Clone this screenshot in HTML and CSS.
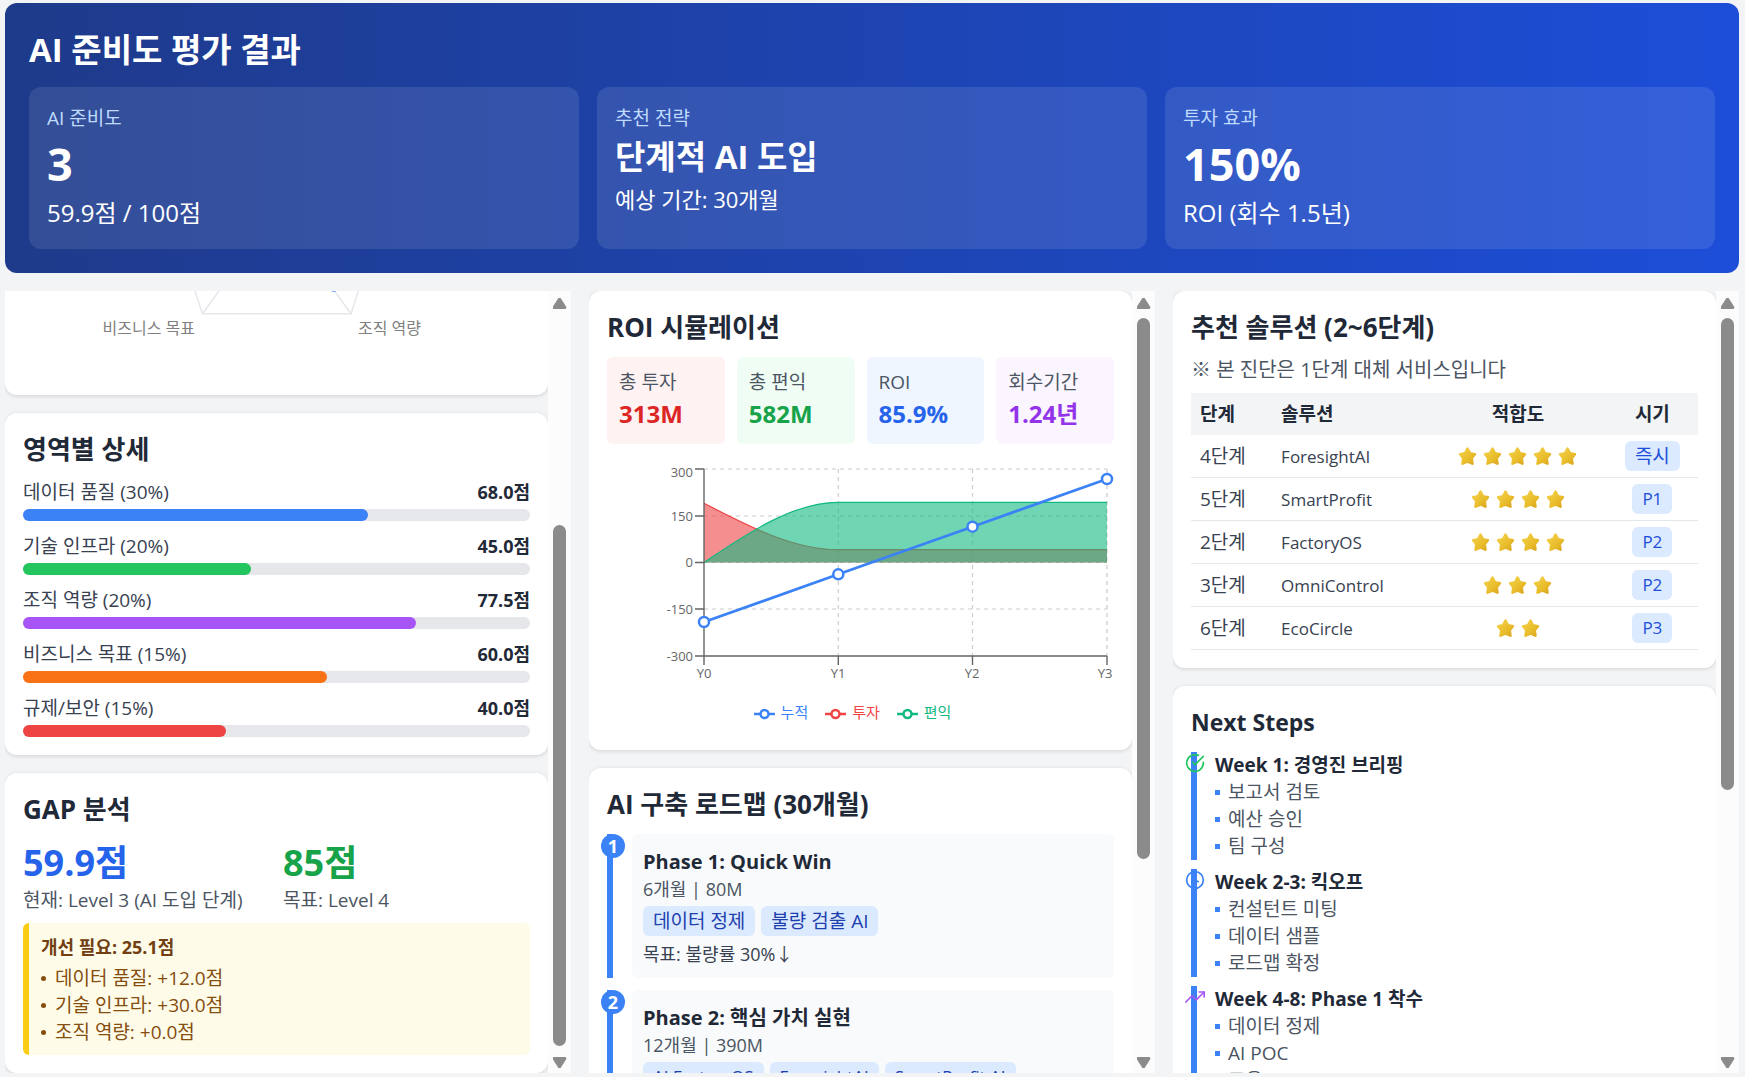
FILE: index.html
```html
<!DOCTYPE html>
<html lang="ko">
<head>
    <meta charset="UTF-8">
    <meta name="viewport" content="width=device-width, initial-scale=1.0">
    <title>AI 준비도 평가 결과</title>
    <link rel="stylesheet" href="styles.css">
</head>
<body>
    <svg class="defs" aria-hidden="true">
        <defs>
            <linearGradient id="gold" x1="0" y1="0" x2="1" y2="1">
                <stop offset="0" stop-color="#f3d04a"/>
                <stop offset="0.6" stop-color="#e9bd2b"/>
                <stop offset="1" stop-color="#dba520"/>
            </linearGradient>
            <symbol id="star" viewBox="0 0 18 18">
                <path d="M9 1.6 11.4 6 16 6.8 13 10.6 13.7 15.800 9 13.900 4.300 15.800 5 10.600 2 6.800 6.600 6Z" fill="url(#gold)" stroke="url(#gold)" stroke-width="2.400" stroke-linejoin="round"/>
            </symbol>
        </defs>
    </svg>

    <header class="hero">
        <h1>AI 준비도 평가 결과</h1>
        <div class="hero-grid">
            <div class="hero-card">
                <div class="hero-label">AI 준비도</div>
                <div class="hero-number">3</div>
                <div class="hero-sub">59.9점 / 100점</div>
            </div>
            <div class="hero-card">
                <div class="hero-label">추천 전략</div>
                <div class="hero-strategy">단계적 AI 도입</div>
                <div class="hero-period">예상 기간: 30개월</div>
            </div>
            <div class="hero-card">
                <div class="hero-label">투자 효과</div>
                <div class="hero-number">150%</div>
                <div class="hero-sub">ROI (회수 1.5년)</div>
            </div>
        </div>
    </header>

    <main class="columns">
        <section class="column">
            <div class="scroll scroll-end">
                <div class="card">
                    <svg class="radar" viewBox="0 0 507 338">
                        <g class="radar-grid">
                            <path d="M253.7 46 373.9 133.3 328 274.7 179.4 274.7 133.5 133.3Z"/>
                            <path d="M253.7 77.6 343.9 143.1 309.4 249.1 198 249.1 163.6 143.1Z"/>
                            <path d="M253.7 109.2 313.8 152.9 290.9 223.6 216.6 223.6 193.6 152.9Z"/>
                            <path d="M253.7 172.4V46M253.7 172.4 373.9 133.3M253.7 172.4 328 274.7M253.7 172.4 179.4 274.7M253.7 172.4 133.5 133.3"/>
                        </g>
                        <path class="radar-area" d="M253.7 86.4 307.8 154.8 311.3 251.7 209.1 233.8 205.6 156.8Z"/>
                        <text x="335" y="295">조직 역량</text>
                        <text x="172" y="295" text-anchor="end">비즈니스 목표</text>
                    </svg>
                </div>

                <div class="card">
                    <h2>영역별 상세</h2>
                    <div class="areas">
                        <div class="area">
                            <div class="area-head"><span>데이터 품질 (30%)</span><b>68.0점</b></div>
                            <div class="track"><div class="fill blue" style="width: 68%"></div></div>
                        </div>
                        <div class="area">
                            <div class="area-head"><span>기술 인프라 (20%)</span><b>45.0점</b></div>
                            <div class="track"><div class="fill green" style="width: 45%"></div></div>
                        </div>
                        <div class="area">
                            <div class="area-head"><span>조직 역량 (20%)</span><b>77.5점</b></div>
                            <div class="track"><div class="fill purple" style="width: 77.5%"></div></div>
                        </div>
                        <div class="area">
                            <div class="area-head"><span>비즈니스 목표 (15%)</span><b>60.0점</b></div>
                            <div class="track"><div class="fill orange" style="width: 60%"></div></div>
                        </div>
                        <div class="area">
                            <div class="area-head"><span>규제/보안 (15%)</span><b>40.0점</b></div>
                            <div class="track"><div class="fill red" style="width: 40%"></div></div>
                        </div>
                    </div>
                </div>

                <div class="card">
                    <h2>GAP 분석</h2>
                    <div class="gap-grid">
                        <div>
                            <div class="gap-score now">59.9점</div>
                            <div class="gap-text">현재: Level 3 (AI 도입 단계)</div>
                        </div>
                        <div>
                            <div class="gap-score goal">85점</div>
                            <div class="gap-text">목표: Level 4</div>
                        </div>
                    </div>
                    <div class="notice">
                        <div class="notice-title">개선 필요: 25.1점</div>
                        <ul>
                            <li>데이터 품질: +12.0점</li>
                            <li>기술 인프라: +30.0점</li>
                            <li>조직 역량: +0.0점</li>
                        </ul>
                    </div>
                </div>
            </div>
            <div class="rail" aria-hidden="true">
                <span class="arrow up"></span>
                <div class="rail-track rail-end"><div class="thumb" style="height: 71.5%"></div></div>
                <span class="arrow down"></span>
            </div>
        </section>

        <section class="column">
            <div class="scroll">
                <div class="card">
                    <h2>ROI 시뮬레이션</h2>
                    <div class="stats">
                        <div class="stat stat-red"><div class="stat-label">총 투자</div><div class="stat-value">313M</div></div>
                        <div class="stat stat-green"><div class="stat-label">총 편익</div><div class="stat-value">582M</div></div>
                        <div class="stat stat-blue"><div class="stat-label">ROI</div><div class="stat-value">85.9%</div></div>
                        <div class="stat stat-purple"><div class="stat-label">회수기간</div><div class="stat-value">1.24년</div></div>
                    </div>
                    <div class="chart">
                        <svg viewBox="0 0 507 228">
                            <g class="grid-lines">
                                <path d="M97 13H500M97 60H500M97 106.5H500M97 153H500"/>
                                <path d="M231.3 13V200M365.5 13V200M500 13V200"/>
                            </g>
                            <path class="invest-area" d="M97 47.3C141.7 70.5 186.6 93.7 231.3 93.7H500V106.5H97Z"/>
                            <path class="invest-line" d="M97 47.3C141.7 70.5 186.6 93.7 231.3 93.7H500"/>
                            <path class="benefit-area" d="M97 106.5C141.7 76.4 186.6 46.3 231.3 46.3H500V106.5H97Z"/>
                            <path class="benefit-line" d="M97 106.5C141.7 76.4 186.6 46.3 231.3 46.3H500"/>
                            <path class="axis" d="M97 13V200H500M88 13H97M88 60H97M88 106.5H97M88 153H97M88 200H97M97 200V209M231.3 200V209M365.5 200V209M500 200V209"/>
                            <path class="total-line" d="M97 166 231.3 118.3 365.5 70.7 500 23"/>
                            <g class="total-dots">
                                <circle cx="97" cy="166" r="5"/>
                                <circle cx="231.3" cy="118.3" r="5"/>
                                <circle cx="365.5" cy="70.7" r="5"/>
                                <circle cx="500" cy="23" r="5"/>
                            </g>
                            <g text-anchor="end">
                                <text x="86" y="21">300</text>
                                <text x="86" y="65">150</text>
                                <text x="86" y="111">0</text>
                                <text x="86" y="158">-150</text>
                                <text x="86" y="205">-300</text>
                            </g>
                            <g text-anchor="middle">
                                <text x="97" y="222">Y0</text>
                                <text x="231" y="222">Y1</text>
                                <text x="365" y="222">Y2</text>
                                <text x="498" y="222">Y3</text>
                            </g>
                        </svg>
                        <ul class="legend">
                            <li class="legend-total"><svg viewBox="0 0 21 12"><path d="M0 6H21"/><circle cx="10.5" cy="6" r="4"/></svg>누적</li>
                            <li class="legend-invest"><svg viewBox="0 0 21 12"><path d="M0 6H21"/><circle cx="10.5" cy="6" r="4"/></svg>투자</li>
                            <li class="legend-benefit"><svg viewBox="0 0 21 12"><path d="M0 6H21"/><circle cx="10.5" cy="6" r="4"/></svg>편익</li>
                        </ul>
                    </div>
                </div>

                <div class="card">
                    <h2>AI 구축 로드맵 (30개월)</h2>
                    <div class="phase">
                        <span class="phase-num">1</span>
                        <div class="phase-body">
                            <h3>Phase 1: Quick Win</h3>
                            <div class="phase-meta">6개월 | 80M</div>
                            <div class="chips"><span class="chip">데이터 정제</span><span class="chip">불량 검출 AI</span></div>
                            <div class="phase-goal">목표: 불량률 30%↓</div>
                        </div>
                    </div>
                    <div class="phase">
                        <span class="phase-num">2</span>
                        <div class="phase-body">
                            <h3>Phase 2: 핵심 가치 실현</h3>
                            <div class="phase-meta">12개월 | 390M</div>
                            <div class="chips"><span class="chip latin">AI FactoryOS</span><span class="chip latin">ForesightAI</span><span class="chip latin">SmartProfit AI</span></div>
                        </div>
                    </div>
                </div>
            </div>
            <div class="rail" aria-hidden="true">
                <span class="arrow up"></span>
                <div class="rail-track"><div class="thumb" style="height: 74.3%"></div></div>
                <span class="arrow down"></span>
            </div>
        </section>

        <section class="column">
            <div class="scroll">
                <div class="card">
                    <h2>추천 솔루션 (2~6단계)</h2>
                    <p class="table-note">※ 본 진단은 1단계 대체 서비스입니다</p>
                    <table>
                        <thead>
                            <tr><th class="col-step">단계</th><th class="col-name">솔루션</th><th class="col-fit">적합도</th><th class="col-time">시기</th></tr>
                        </thead>
                        <tbody>
                            <tr>
                                <td>4단계</td><td class="latin">ForesightAI</td>
                                <td><div class="stars"><svg><use href="#star"/></svg><svg><use href="#star"/></svg><svg><use href="#star"/></svg><svg><use href="#star"/></svg><svg><use href="#star"/></svg></div></td>
                                <td class="center"><span class="chip">즉시</span></td>
                            </tr>
                            <tr>
                                <td>5단계</td><td class="latin">SmartProfit</td>
                                <td><div class="stars"><svg><use href="#star"/></svg><svg><use href="#star"/></svg><svg><use href="#star"/></svg><svg><use href="#star"/></svg></div></td>
                                <td class="center"><span class="chip latin">P1</span></td>
                            </tr>
                            <tr>
                                <td>2단계</td><td class="latin">FactoryOS</td>
                                <td><div class="stars"><svg><use href="#star"/></svg><svg><use href="#star"/></svg><svg><use href="#star"/></svg><svg><use href="#star"/></svg></div></td>
                                <td class="center"><span class="chip latin">P2</span></td>
                            </tr>
                            <tr>
                                <td>3단계</td><td class="latin">OmniControl</td>
                                <td><div class="stars"><svg><use href="#star"/></svg><svg><use href="#star"/></svg><svg><use href="#star"/></svg></div></td>
                                <td class="center"><span class="chip latin">P2</span></td>
                            </tr>
                            <tr>
                                <td>6단계</td><td class="latin">EcoCircle</td>
                                <td><div class="stars"><svg><use href="#star"/></svg><svg><use href="#star"/></svg></div></td>
                                <td class="center"><span class="chip latin">P3</span></td>
                            </tr>
                        </tbody>
                    </table>
                </div>

                <div class="card">
                    <h2 class="title-latin">Next Steps</h2>
                    <div class="step">
                        <svg class="step-icon icon-green" viewBox="0 0 24 24"><path d="M22 11.08V12a10 10 0 1 1-5.93-9.14"/><path d="M22 4 12 14.01l-3-3"/></svg>
                        <h4>Week 1: 경영진 브리핑</h4>
                        <ul>
                            <li>보고서 검토</li>
                            <li>예산 승인</li>
                            <li>팀 구성</li>
                        </ul>
                    </div>
                    <div class="step">
                        <svg class="step-icon icon-blue" viewBox="0 0 24 24"><circle cx="12" cy="12" r="10"/><path d="M12 6v6l4 2"/></svg>
                        <h4>Week 2-3: 킥오프</h4>
                        <ul>
                            <li>컨설턴트 미팅</li>
                            <li>데이터 샘플</li>
                            <li>로드맵 확정</li>
                        </ul>
                    </div>
                    <div class="step">
                        <svg class="step-icon icon-purple" viewBox="0 0 24 24"><path d="M23 6l-9.500 9.500-5-5L1 18"/><path d="M17 6h6v6"/></svg>
                        <h4>Week 4-8: Phase 1 착수</h4>
                        <ul>
                            <li>데이터 정제</li>
                            <li>AI POC</li>
                            <li>교육</li>
                        </ul>
                    </div>
                </div>
            </div>
            <div class="rail" aria-hidden="true">
                <span class="arrow up"></span>
                <div class="rail-track"><div class="thumb" style="height: 64.8%"></div></div>
                <span class="arrow down"></span>
            </div>
        </section>
    </main>
</body>
</html>
```
FILE: styles.css
```css
* {
    box-sizing: border-box;
}
body {
    margin: 0;
    height: 100vh;
    padding: 3px 6px 4px 5px;
    display: flex;
    flex-direction: column;
    gap: 18px;
    background: #f3f4f6;
    color: #1f2937;
    font-family: "Open Sans", "Noto Sans CJK KR", sans-serif;
    font-size: 19px;
    line-height: 27px;
    overflow: hidden;
}
h1, h2, h3, h4, p, ul {
    margin: 0;
    padding: 0;
}
ul {
    list-style: none;
}
.defs {
    position: absolute;
    width: 0;
    height: 0;
}

/* header */
.hero {
    padding: 24px;
    border-radius: 12px;
    background: linear-gradient(to right, #1e3a8a, #1d4ed8);
    color: white;
}
.hero h1 {
    font-size: 33px;
    line-height: 45px;
    margin-bottom: 15px;
}
.hero-grid {
    display: grid;
    grid-template-columns: repeat(3, 1fr);
    gap: 18px;
}
.hero-card {
    padding: 18px;
    border-radius: 12px;
    background: rgba(255, 255, 255, 0.1);
}
.hero-label {
    color: #bfdbfe;
}
.hero-number {
    font-size: 45px;
    line-height: 63px;
    font-weight: bold;
}
.hero-sub {
    font-size: 24px;
    line-height: 36px;
}
.hero-strategy {
    font-size: 33px;
    line-height: 50px;
    font-weight: bold;
}
.hero-period {
    font-size: 22px;
    line-height: 34px;
}

/* columns */
.columns {
    flex: 1;
    min-height: 0;
    display: grid;
    grid-template-columns: repeat(3, minmax(0, 1fr));
    grid-template-rows: minmax(0, 1fr);
    gap: 18px;
}
.column {
    display: flex;
    min-height: 0;
}
.scroll {
    flex: 1;
    min-width: 0;
    display: flex;
    flex-direction: column;
    gap: 18px;
    overflow: hidden;
}
.scroll-end {
    justify-content: flex-end;
}
.rail {
    width: 23px;
    flex-shrink: 0;
    display: flex;
    flex-direction: column;
    align-items: center;
    justify-content: space-between;
    padding: 7px 0 5px;
    background: #fcfcfc;
}
.rail-track {
    flex: 1;
    margin: 9px 0 11px;
    display: flex;
    flex-direction: column;
}
.rail-end {
    justify-content: flex-end;
}
.thumb {
    width: 13px;
    border-radius: 7px;
    background: #8b8b8b;
}
.arrow {
    width: 14px;
    height: 11px;
    background: #8b8b8b;
}
.arrow.up {
    clip-path: polygon(42% 0, 58% 0, 100% 85%, 94% 100%, 6% 100%, 0 85%);
}
.arrow.down {
    clip-path: polygon(6% 0, 94% 0, 100% 15%, 58% 100%, 42% 100%, 0 15%);
}
.card {
    flex-shrink: 0;
    padding: 18px;
    border-radius: 12px;
    background: white;
    box-shadow: 0 1px 4px rgba(0, 0, 0, 0.14);
}
.card h2 {
    font-size: 26px;
    line-height: 36px;
    margin-bottom: 12px;
}
.card .title-latin {
    font-size: 23px;
}

/* left column */
.radar {
    display: block;
    width: 100%;
}
.radar-grid path {
    fill: none;
    stroke: #e5e7eb;
    stroke-width: 1.5;
}
.radar-area {
    fill: rgba(59, 130, 246, 0.5);
    stroke: #3b82f6;
    stroke-width: 2;
}
.radar text {
    font-size: 16px;
    fill: #808080;
}
.areas {
    display: flex;
    flex-direction: column;
    gap: 12px;
}
.area-head {
    display: flex;
    justify-content: space-between;
    margin-bottom: 3px;
    color: #374151;
}
.area-head b {
    font-size: 18px;
    color: #1f2937;
}
.track {
    height: 12px;
    border-radius: 6px;
    background: #e5e7eb;
}
.fill {
    height: 12px;
    border-radius: 6px;
}
.blue { background: #3b82f6; }
.green { background: #22c55e; }
.purple { background: #a855f7; }
.orange { background: #f97316; }
.red { background: #ef4444; }

.gap-grid {
    display: grid;
    grid-template-columns: 1fr 1fr;
    gap: 13px;
}
.gap-score {
    font-size: 36px;
    line-height: 48px;
    font-weight: bold;
}
.now { color: #2563eb; }
.goal { color: #16a34a; }
.gap-text {
    color: #4b5563;
    white-space: nowrap;
}
.notice {
    margin-top: 9px;
    padding: 11px 12px 9px;
    border-left: 6px solid #facc15;
    border-radius: 6px;
    background: #fefce8;
    color: #854d0e;
}
.notice-title {
    margin-bottom: 4px;
    font-size: 18px;
    font-weight: bold;
    color: #713f12;
}
.notice li {
    display: flex;
    align-items: center;
    gap: 9px;
}
.notice li::before {
    content: '';
    width: 5px;
    height: 5px;
    border-radius: 50%;
    background: #854d0e;
}

/* middle column */
.stats {
    display: grid;
    grid-template-columns: repeat(4, 1fr);
    gap: 12px;
}
.stat {
    padding: 12px;
    border-radius: 6px;
    white-space: nowrap;
}
.stat-label {
    color: #4b5563;
}
.stat-value {
    font-size: 24px;
    line-height: 36px;
    font-weight: bold;
}
.stat-red { background: #fef2f2; color: #dc2626; }
.stat-green { background: #f0fdf4; color: #16a34a; }
.stat-blue { background: #eff6ff; color: #2563eb; }
.stat-purple { background: #faf5ff; color: #9333ea; }

.chart {
    margin-top: 12px;
    padding-bottom: 9px;
}
.chart > svg {
    display: block;
    width: 100%;
    overflow: visible;
}
.chart text {
    font-size: 13px;
    fill: #666;
}
.grid-lines {
    fill: none;
    stroke: #ccc;
    stroke-width: 1.2;
    stroke-dasharray: 4 4;
}
.invest-area { fill: #ef4444; fill-opacity: 0.6; }
.invest-line { fill: none; stroke: #ef4444; stroke-width: 1.2; }
.benefit-area { fill: #10b981; fill-opacity: 0.6; }
.benefit-line { fill: none; stroke: #10b981; stroke-width: 1.2; }
.axis {
    fill: none;
    stroke: #666;
    stroke-width: 1.4;
}
.total-line {
    fill: none;
    stroke: #3b82f6;
    stroke-width: 2.8;
}
.total-dots circle {
    fill: white;
    stroke: #3b82f6;
    stroke-width: 2.5;
}
.legend {
    display: flex;
    justify-content: center;
    gap: 17px;
    margin-top: 17px;
    padding-right: 16px;
    font-size: 15px;
    line-height: 22px;
}
.legend li {
    display: flex;
    align-items: center;
    gap: 6px;
}
.legend svg {
    width: 21px;
    height: 12px;
    margin-top: 3px;
    fill: white;
    stroke: currentColor;
    stroke-width: 2.5;
}
.legend-total { color: #3b82f6; }
.legend-invest { color: #ef4444; }
.legend-benefit { color: #10b981; }

.phase {
    position: relative;
    padding-left: 19px;
    border-left: 6px solid #3b82f6;
}
.phase + .phase {
    margin-top: 12px;
}
.phase-num {
    position: absolute;
    left: -12px;
    top: 0;
    width: 24px;
    height: 24px;
    border-radius: 50%;
    background: #3b82f6;
    color: white;
    font-size: 18px;
    line-height: 24px;
    font-weight: bold;
    text-align: center;
}
.phase-body {
    padding: 13px 11px 10px;
    border-radius: 6px;
    background: #f9fafb;
}
.phase h3 {
    font-size: 20px;
    line-height: 29px;
}
.phase-meta {
    font-size: 18px;
    color: #4b5563;
}
.phase-goal {
    font-size: 18px;
    color: #374151;
}
.chips {
    display: flex;
    gap: 6px;
    margin: 3px 0 5px;
}
.chip {
    display: inline-block;
    padding: 0 10px;
    border-radius: 6px;
    background: #dbeafe;
    color: #1d4ed8;
    line-height: 30px;
    white-space: nowrap;
}
.chips .chip {
    color: #1e40af;
}
.latin {
    font-size: 17px;
}

/* right column */
.table-note {
    margin: -1px 0 10px;
    font-size: 20px;
    color: #4b5563;
}
table {
    width: 100%;
    table-layout: fixed;
    border-collapse: separate;
    border-spacing: 0;
}
th {
    height: 42px;
    padding: 0 9px;
    background: #f3f4f6;
    text-align: left;
}
td {
    height: 43px;
    padding: 0 9px;
    border-bottom: 1px solid #e5e7eb;
    color: #374151;
}
.col-step { width: 16%; }
.col-name { width: 31%; }
.col-fit { width: 35%; text-align: center; }
.col-time { width: 18%; text-align: center; }
.center {
    text-align: center;
}
.stars {
    display: flex;
    justify-content: center;
    gap: 6px;
}
.stars svg {
    width: 19px;
    height: 19px;
}

.step {
    position: relative;
    padding-left: 18px;
    border-left: 6px solid #3b82f6;
}
.step + .step {
    margin-top: 12px;
}
.step-icon {
    position: absolute;
    left: -12px;
    top: 1px;
    width: 20px;
    height: 20px;
    fill: none;
    stroke: currentColor;
    stroke-width: 2;
    stroke-linecap: round;
    stroke-linejoin: round;
}
.icon-green { color: #22c55e; }
.icon-blue { color: #3b82f6; }
.icon-purple { color: #a855f7; }
.step h4 {
    font-size: 19px;
    line-height: 27px;
}
.step ul {
    margin-bottom: -3px;
}
.step li {
    display: flex;
    align-items: center;
    gap: 8px;
    color: #4b5563;
}
.step li::before {
    content: '';
    width: 5px;
    height: 5px;
    background: #3b82f6;
}

@media (max-width: 1100px) {
    body {
        height: auto;
        overflow: auto;
    }
    .hero-grid,
    .columns {
        grid-template-columns: 1fr;
        grid-template-rows: auto;
    }
    .rail {
        display: none;
    }
}
```
